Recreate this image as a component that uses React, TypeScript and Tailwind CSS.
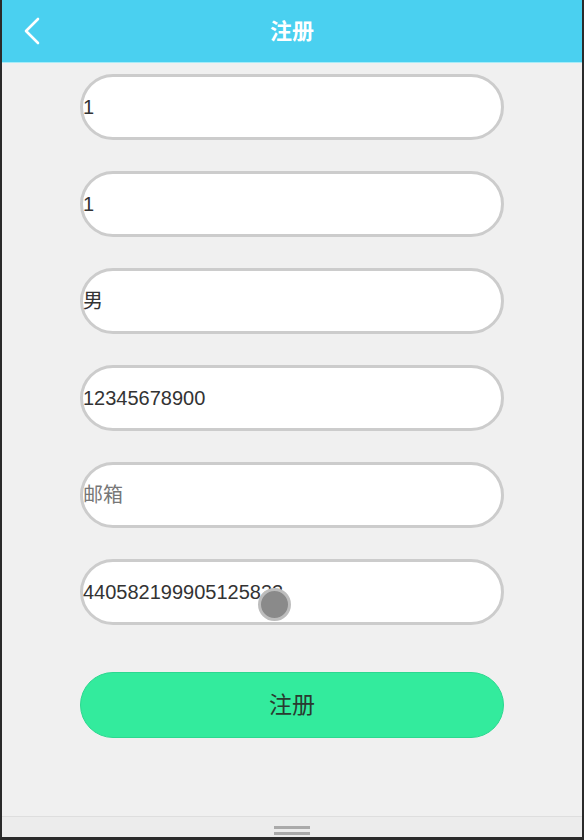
const fields = [
  { value: "1" },
  { value: "1" },
  { value: "男" },
  { value: "12345678900" },
  { value: "", placeholder: "邮箱" },
  { value: "440582199905125833" },
];

export default function App() {
  return (
    <div
      className="relative flex h-[840px] w-[584px] flex-col border-x-2 border-b-[3px] border-[#2a2a2a] bg-[#f0f0f0]"
      style={{ fontFamily: '"Liberation Sans", Arial, "Noto Sans CJK SC", sans-serif' }}
    >
      <header className="relative flex h-[63px] shrink-0 items-center justify-center border-b border-[#a8ecf8] bg-[#4ad0f0]">
        <svg
          className="absolute left-[20px] top-[17px] h-[28px] w-[20px]"
          viewBox="0 0 20 28"
          fill="none"
          stroke="white"
          strokeWidth={2.6}
          strokeLinecap="round"
          strokeLinejoin="round"
        >
          <polyline points="16,2 4,14 16,26" />
        </svg>
        <h1 className="text-[22px] font-bold text-white">注册</h1>
      </header>

      <main className="flex flex-1 flex-col items-center pt-[11px]">
        <div className="flex flex-col gap-[31px]">
          {fields.map((f, i) => (
            <div
              key={i}
              className="flex h-[66px] w-[424px] items-center rounded-full border-[3px] border-[#cccccc] bg-white"
            >
              <input
                readOnly
                value={f.value}
                placeholder={f.placeholder}
                className="w-full bg-transparent text-[20px] text-[#333] outline-none placeholder:text-[#777]"
              />
            </div>
          ))}
        </div>
        <button className="mt-[47px] h-[66px] w-[424px] rounded-full border border-[#2cd890] bg-[#33eb9d] text-[23px] text-[#2a3a30]">
          注册
        </button>
      </main>

      <footer className="flex h-[21px] shrink-0 flex-col items-center justify-end gap-[3px] border-t border-[#dedede] bg-[#ececec] pb-[2px]">
        <span className="h-[3px] w-[36px] bg-[#aaaaaa]" />
        <span className="h-[3px] w-[36px] bg-[#aaaaaa]" />
      </footer>

      <span className="absolute left-[256px] top-[588px] h-[33px] w-[33px] rounded-full border-[3px] border-[#bdbdbd] bg-[#8a8a8a]" />
    </div>
  );
}
